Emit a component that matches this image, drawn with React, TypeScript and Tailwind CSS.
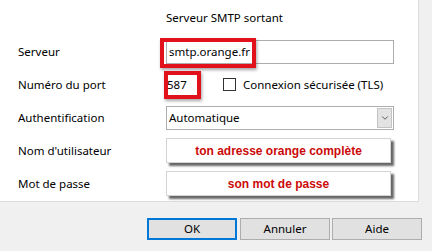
import { ChevronDown } from "lucide-react";

const font = { fontFamily: '"Noto Sans", "Open Sans", sans-serif' };

function Row({ label, children }: { label: string; children: React.ReactNode }) {
  return (
    <div className="flex h-[33px] items-center">
      <div className="w-[166px] pl-[18px] text-[11.5px] text-black">{label}</div>
      <div className="relative flex flex-1 items-center">{children}</div>
    </div>
  );
}

function HintBox({ text }: { text: string }) {
  return (
    <div className="flex h-[25px] w-[225px] items-center justify-center border border-[#d4d4d4] bg-white shadow-[3px_3px_2px_rgba(0,0,0,0.6)]">
      <span className="font-['Liberation_Sans',Arial,sans-serif] text-[12px] font-bold text-[#cc0a0a]">
        {text}
      </span>
    </div>
  );
}

export default function App() {
  return (
    <div className="h-[251px] w-[432px] overflow-hidden bg-[#f0f0f0]" style={font}>
      {/* ── Onglet serveur sortant ── */}
      <div className="h-[202px] w-[419px] border-b border-r border-[#dcdcdc] bg-white">
        <div className="h-[35px] pl-[166px] pt-[10px] text-[11.5px] leading-[16px] text-black">
          Serveur SMTP sortant
        </div>

        <Row label="Serveur">
          <div className="flex h-[24px] w-[228px] items-center border border-[#adadad] bg-white pl-[2px] text-[11.5px]">
            smtp.orange.fr
          </div>
          <div className="absolute left-[-6px] top-[-2px] h-[30px] w-[96px] border-[4px] border-[#e2121c] shadow-[1px_2px_3px_rgba(0,0,0,0.35)]" />
        </Row>

        <Row label="Numéro du port">
          <div className="flex h-[24px] w-[34px] items-center pl-[1px] text-[11.5px]">587</div>
          <div className="absolute left-[-2px] top-[-2px] h-[28px] w-[37px] border-[4px] border-[#e2121c] shadow-[1px_2px_3px_rgba(0,0,0,0.35)]" />
          <div className="ml-[23px] h-[13px] w-[13px] border border-[#333333] bg-white" />
          <span className="ml-[7px] text-[11.5px]">Connexion sécurisée (TLS)</span>
        </Row>

        <Row label="Authentification">
          <div className="flex h-[24px] w-[228px] items-center border border-[#adadad] bg-white">
            <span className="flex-1 pl-[2px] text-[11.5px]">Automatique</span>
            <div className="mr-[1px] flex h-[20px] w-[15px] items-center justify-center border border-[#c4c4c4] bg-[#e3e3e3]">
              <ChevronDown className="h-[10px] w-[10px] text-[#404040]" strokeWidth={2} />
            </div>
          </div>
        </Row>

        <Row label="Nom d'utilisateur">
          <HintBox text="ton adresse orange complète" />
        </Row>

        <Row label="Mot de passe">
          <HintBox text="son mot de passe" />
        </Row>
      </div>

      {/* ── Boutons ── */}
      <div className="mt-[16px] flex justify-end pr-[10px] text-[11.5px]">
        <button className="h-[22px] w-[90px] border-2 border-[#0078d7] bg-[#e1e1e1]">OK</button>
        <button className="ml-[3px] h-[22px] w-[90px] border border-[#adadad] bg-[#e1e1e1]">Annuler</button>
        <button className="ml-[2px] h-[22px] w-[90px] border border-[#adadad] bg-[#e1e1e1]">Aide</button>
      </div>
    </div>
  );
}
